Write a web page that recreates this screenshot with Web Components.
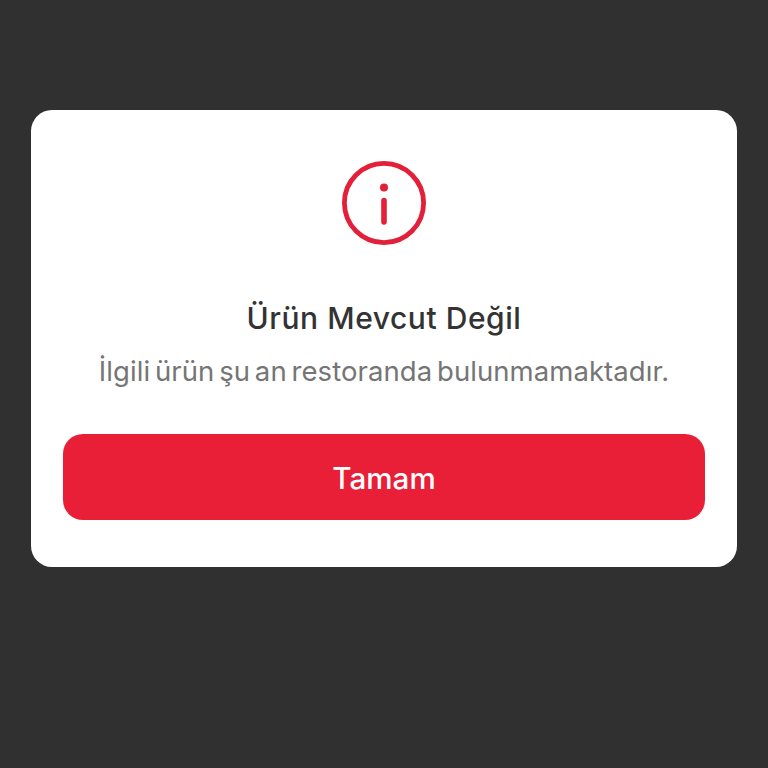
<!DOCTYPE html>
<html lang="tr">
<head>
<meta charset="utf-8">
<title>Ürün Mevcut Değil</title>
<style>
  html, body { margin: 0; height: 100%; background: #303030; }
</style>
</head>
<body>
<x-overlay>
  <x-dialog heading="Ürün Mevcut Değil" message="İlgili ürün şu an restoranda bulunmamaktadır.">
    <x-button>Tamam</x-button>
  </x-dialog>
</x-overlay>
<script>
/* global HTMLElement customElements */

class XOverlay extends HTMLElement {
  constructor() {
    super();
    const shadowRoot = this.attachShadow({ mode: 'open' });
    shadowRoot.innerHTML = `
      <style>
        :host {
          display: block;
          box-sizing: border-box;
          height: 768px;
          padding: 110px 31px 0;
          background: #303030;
        }
      </style>
      <slot></slot>
    `;
  }
}
customElements.define('x-overlay', XOverlay);

class XInfoIcon extends HTMLElement {
  constructor() {
    super();
    const shadowRoot = this.attachShadow({ mode: 'open' });
    shadowRoot.innerHTML = `
      <style>
        :host { display: block; width: 84px; height: 84px; }
        svg { display: block; }
      </style>
      <svg width="84" height="84" viewBox="0 0 84 84" fill="none">
        <circle cx="42" cy="42" r="39.6" stroke="#e2203a" stroke-width="4.8"/>
        <circle cx="42" cy="26.5" r="4" fill="#e2203a"/>
        <path d="M42 39.5V61" stroke="#e2203a" stroke-width="5.6" stroke-linecap="round"/>
      </svg>
    `;
  }
}
customElements.define('x-info-icon', XInfoIcon);

class XDialog extends HTMLElement {
  constructor() {
    super();
    const shadowRoot = this.attachShadow({ mode: 'open' });
    shadowRoot.innerHTML = `
      <style>
        :host {
          display: flex;
          flex-direction: column;
          align-items: center;
          box-sizing: border-box;
          height: 457px;
          padding: 51px 32px 47px;
          background: #fff;
          border-radius: 21px;
          font-family: Inter, "Noto Sans", sans-serif;
        }
        h1 {
          margin: 55px 0 0;
          font-size: 30px;
          line-height: 36px;
          font-weight: 550;
          letter-spacing: 0.55px;
          color: #333;
          white-space: nowrap;
        }
        p {
          margin: 17px 0 0;
          font-size: 27.5px;
          line-height: 36px;
          font-weight: 400;
          letter-spacing: 0.07px;
          word-spacing: -3px;
          color: #757575;
          white-space: nowrap;
        }
        .actions { align-self: stretch; margin-top: 45px; }
      </style>
      <x-info-icon></x-info-icon>
      <h1 id=heading></h1>
      <p id=message></p>
      <div class=actions><slot></slot></div>
    `;
    this._heading = shadowRoot.querySelector('#heading');
    this._message = shadowRoot.querySelector('#message');
  }

  static get observedAttributes() {
    return ['heading', 'message'];
  }

  attributeChangedCallback(attr, oldValue, newValue) {
    if (attr === 'heading') this._heading.textContent = newValue;
    if (attr === 'message') this._message.textContent = newValue;
  }
}
customElements.define('x-dialog', XDialog);

class XButton extends HTMLElement {
  constructor() {
    super();
    const shadowRoot = this.attachShadow({ mode: 'open' });
    shadowRoot.innerHTML = `
      <style>
        :host {
          display: flex;
          align-items: center;
          justify-content: center;
          box-sizing: border-box;
          height: 86px;
          padding-top: 2px;
          background: #e81f37;
          border-radius: 20px;
          color: #fff;
          font-family: Inter, "Noto Sans", sans-serif;
          font-size: 29.6px;
          font-weight: 550;
        }
      </style>
      <slot></slot>
    `;
  }
}
customElements.define('x-button', XButton);
</script>
</body>
</html>
